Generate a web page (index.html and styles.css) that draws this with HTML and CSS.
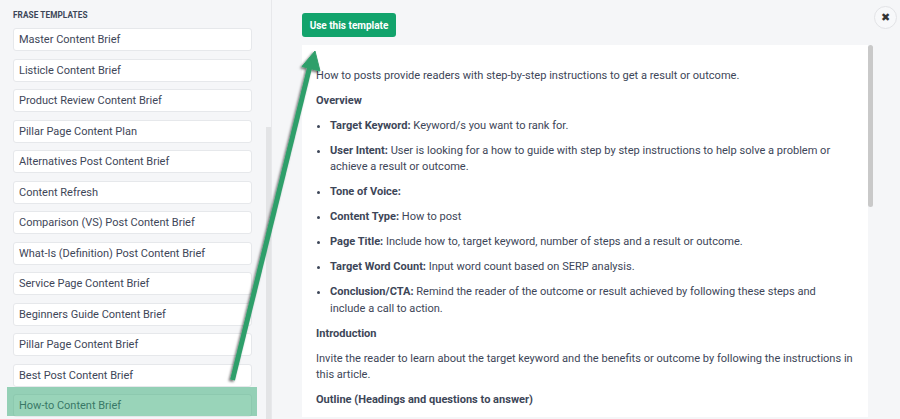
FILE: index.html
```html
<!DOCTYPE html>
<html lang="en">
<head>
<meta charset="utf-8">
<title>Frase Templates</title>
<link rel="stylesheet" href="styles.css">
</head>
<body>
<div class="app">
  <aside class="sidebar">
    <div class="sidebar-inner">
      <h2 class="sidebar-title">FRASE TEMPLATES</h2>
      <ul class="template-list">
        <li class="template-item">Master Content Brief</li>
        <li class="template-item">Listicle Content Brief</li>
        <li class="template-item">Product Review Content Brief</li>
        <li class="template-item">Pillar Page Content Plan</li>
        <li class="template-item">Alternatives Post Content Brief</li>
        <li class="template-item">Content Refresh</li>
        <li class="template-item">Comparison (VS) Post Content Brief</li>
        <li class="template-item">What-Is (Definition) Post Content Brief</li>
        <li class="template-item">Service Page Content Brief</li>
        <li class="template-item">Beginners Guide Content Brief</li>
        <li class="template-item">Pillar Page Content Brief</li>
        <li class="template-item">Best Post Content Brief</li>
        <li class="template-item">How-to Content Brief</li>
      </ul>
    </div>
    <div class="side-scroll"><div class="side-thumb"></div></div>
  </aside>

  <main class="main">
    <div class="toolbar">
      <button class="use-btn">Use this template</button>
    </div>
    <div class="preview">
      <div class="preview-content">
        <p>How to posts provide readers with step-by-step instructions to get a result or outcome.</p>
        <h3>Overview</h3>
        <ul class="bullets">
          <li><strong>Target Keyword:</strong> Keyword/s you want to rank for.</li>
          <li><strong>User Intent:</strong> User is looking for a how to guide with step by step instructions to help solve a problem or achieve a result or outcome.</li>
          <li><strong>Tone of Voice:</strong></li>
          <li><strong>Content Type:</strong> How to post</li>
          <li><strong>Page Title:</strong> Include how to, target keyword, number of steps and a result or outcome.</li>
          <li><strong>Target Word Count:</strong> Input word count based on SERP analysis.</li>
          <li><strong>Conclusion/CTA:</strong> Remind the reader of the outcome or result achieved by following these steps and include a call to action.</li>
        </ul>
        <h3>Introduction</h3>
        <p>Invite the reader to learn about the target keyword and the benefits or outcome by following the instructions in this article.</p>
        <h3>Outline (Headings and questions to answer)</h3>
      </div>
      <div class="preview-scroll"><div class="preview-thumb"></div></div>
    </div>
  </main>

  <button class="close-btn" aria-label="Close">&#x2716;</button>

  <div class="highlight"></div>

  <svg class="arrow" width="900" height="419" viewBox="0 0 900 419" aria-hidden="true">
    <defs>
      <filter id="shadow" x="-20%" y="-20%" width="140%" height="140%">
        <feDropShadow dx="-1.5" dy="1.5" stdDeviation="1.2" flood-color="#000" flood-opacity="0.55"/>
      </filter>
    </defs>
    <g filter="url(#shadow)" fill="#2f9f6b" stroke="#2f9f6b">
      <line x1="232.5" y1="380" x2="310" y2="66" stroke-width="5" stroke-linecap="butt"/>
      <polygon points="315,51 302,66.5 320,71" stroke-width="1" stroke-linejoin="round"/>
    </g>
  </svg>
</div>
</body>
</html>
```

FILE: styles.css
```css
* { box-sizing: border-box; }

html, body {
  margin: 0;
  padding: 0;
}

body {
  width: 900px;
  height: 419px;
  overflow: hidden;
  background: #f5f6f8;
  font-family: Roboto, "Liberation Sans", Arial, sans-serif;
  color: #3d4658;
}

.app {
  position: relative;
  display: flex;
  width: 900px;
  height: 419px;
}

/* Sidebar */
.sidebar {
  width: 272px;
  flex: none;
  display: flex;
  border-right: 1px solid #e7e8eb;
  background: #f5f6f8;
}

.sidebar-inner {
  width: 252px;
  padding: 10px 0 0 13px;
}

.sidebar-title {
  margin: 0 0 8px 0;
  font-size: 8.2px;
  font-weight: 700;
  letter-spacing: 0.1px;
  line-height: 10px;
  color: #3d4658;
}

.template-list {
  list-style: none;
  margin: 0;
  padding: 0;
  display: flex;
  flex-direction: column;
  gap: 7.5px;
}

.template-item {
  height: 23px;
  padding-left: 5px;
  display: flex;
  align-items: center;
  background: #fff;
  border: 1px solid #e6e8eb;
  border-radius: 3px;
  font-size: 11px;
  color: #3e4658;
}

.side-scroll {
  margin-left: 14px;
  padding-top: 127px;
  width: 5px;
}

.side-thumb {
  height: 292px;
  background: #e3e4e6;
}

/* Main */
.main {
  flex: 1;
  display: flex;
  flex-direction: column;
  padding-left: 30px;
}

.toolbar {
  height: 45px;
  padding-top: 13px;
}

.use-btn {
  height: 24px;
  width: 94px;
  padding: 0;
  border: none;
  border-radius: 3px;
  background: #12a36c;
  color: #fff;
  font-family: Roboto, "Liberation Sans", Arial, sans-serif;
  font-size: 10px;
  font-weight: 700;
}

.preview {
  display: flex;
  width: 571px;
  height: 372px;
}

.preview-content {
  width: 566px;
  background: #fff;
  padding: 22.5px 14px 0 14px;
  font-size: 11.05px;
  line-height: 16.5px;
  color: #3d4658;
}

.preview-content p {
  margin: 0 0 8.5px 0;
}

.preview-content h3 {
  margin: 0 0 8.5px 0;
  font-size: 11.05px;
  font-weight: 700;
}

.bullets {
  margin: 0 0 8.5px 0;
  padding-left: 14px;
  padding-right: 8px;
}

.bullets li {
  margin-bottom: 8.5px;
}

.bullets strong {
  font-weight: 700;
}

.preview-scroll {
  width: 5px;
}

.preview-thumb {
  height: 162px;
  background: #c9c9c9;
  border-radius: 3px;
}

/* Close */
.close-btn {
  position: absolute;
  left: 874px;
  top: 6px;
  width: 23px;
  height: 23px;
  padding: 0;
  border-radius: 50%;
  border: 1px solid #e2e3e6;
  background: #f7f8fa;
  color: #333;
  font-size: 11px;
  font-weight: 700;
  line-height: 21px;
  text-align: center;
  font-family: "DejaVu Sans", sans-serif;
}

/* Overlays */
.highlight {
  position: absolute;
  left: 7px;
  top: 387px;
  width: 250px;
  height: 29px;
  background: rgba(51, 169, 115, 0.5);
}

.arrow {
  position: absolute;
  left: 0;
  top: 0;
  pointer-events: none;
}
```
